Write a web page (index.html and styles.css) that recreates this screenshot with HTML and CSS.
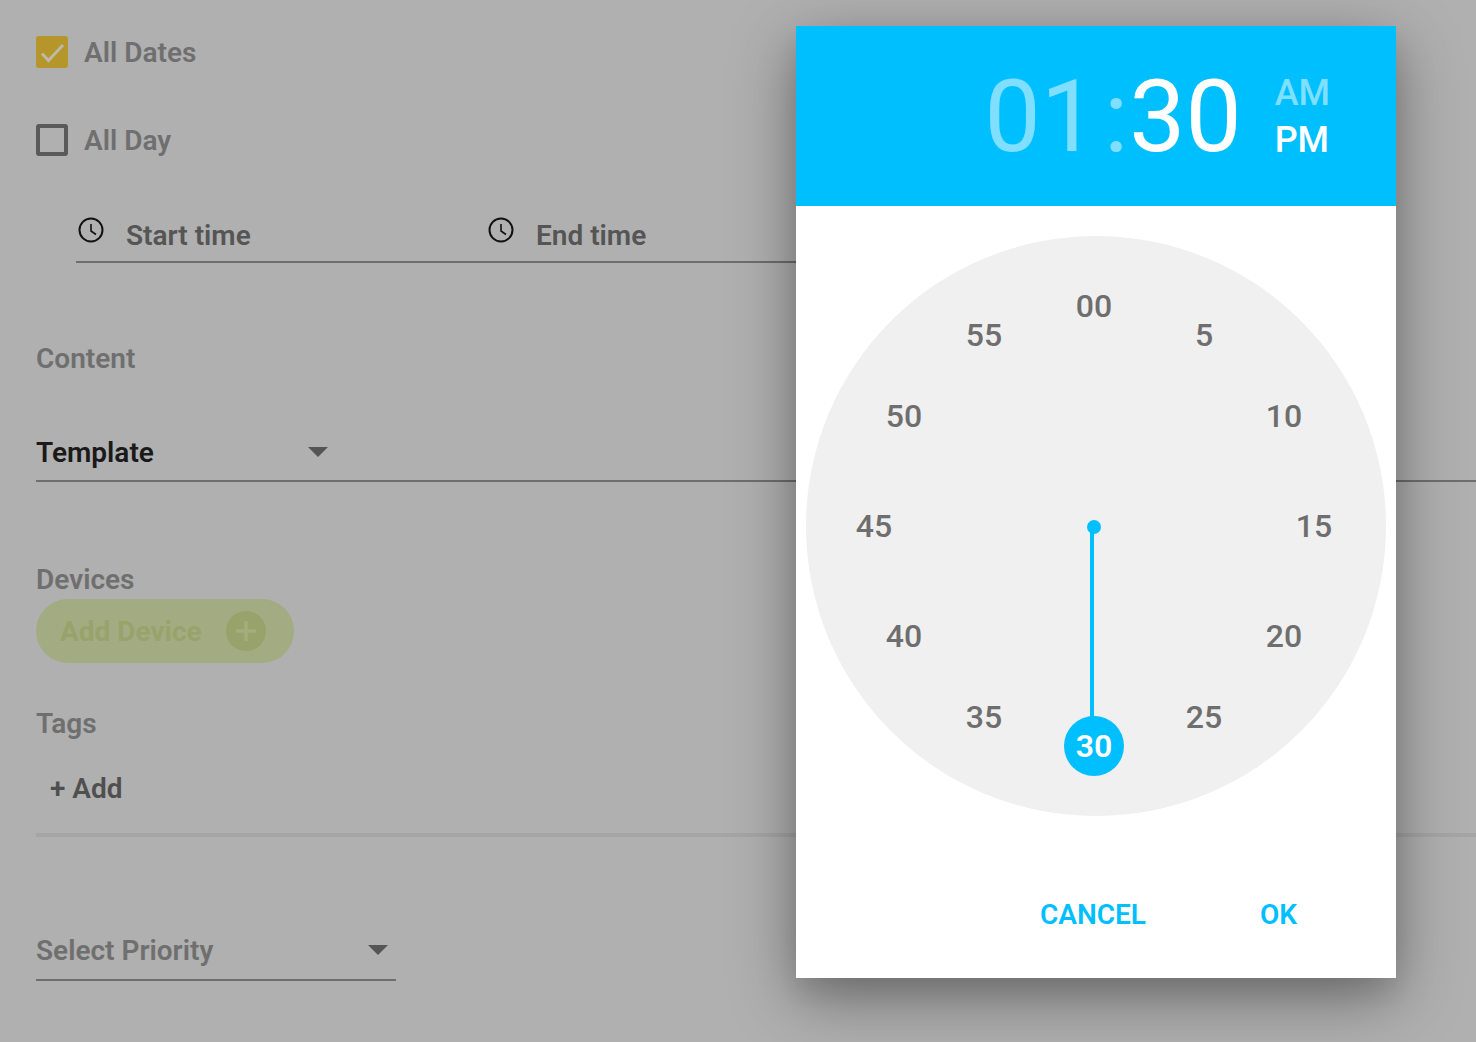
FILE: index.html
```html
<!DOCTYPE html>
<html lang="en">
	<head>
		<meta charset="UTF-8" />
		<meta name="viewport" content="width=device-width, initial-scale=1.0" />
		<title>Schedule</title>
		<link rel="stylesheet" href="styles.css">
	</head>
	<body>
		<form class="scheduleForm">
			<label class="checkRow">
				<span class="checkBox checked">
					<svg viewBox="0 0 32 32" width="32" height="32"><path d="M6 17.5l6.5 7L27 9" fill="none" stroke="#bdb9a8" stroke-width="3"/></svg>
				</span>
				All Dates
			</label>
			<label class="checkRow">
				<span class="checkBox"></span>
				All Day
			</label>

			<div class="timeRow">
				<div class="timeField">
					<svg class="clockIcon" viewBox="0 0 26 26" width="26" height="26"><circle cx="13" cy="13" r="11.5" fill="none" stroke="#111" stroke-width="2"/><path d="M13 7v7l5 3.5" fill="none" stroke="#111" stroke-width="1.6"/></svg>
					<span>Start time</span>
				</div>
				<div class="timeField">
					<svg class="clockIcon" viewBox="0 0 26 26" width="26" height="26"><circle cx="13" cy="13" r="11.5" fill="none" stroke="#111" stroke-width="2"/><path d="M13 7v7l5 3.5" fill="none" stroke="#111" stroke-width="1.6"/></svg>
					<span>End time</span>
				</div>
			</div>

			<div class="sectionLabel contentLabel">Content</div>
			<div class="selectRow templateRow">
				<div class="selectValue">
					<span>Template</span>
					<i class="caret"></i>
				</div>
			</div>

			<div class="sectionLabel devicesLabel">Devices</div>
			<div class="addDevice">
				<span>Add Device</span>
				<span class="addDevicePlus">
					<svg viewBox="0 0 40 40" width="40" height="40"><path d="M20 10v20M10 20h20" stroke="#a3ad7e" stroke-width="3.4"/></svg>
				</span>
			</div>

			<div class="sectionLabel tagsLabel">Tags</div>
			<div class="tagsRow">+ Add</div>

			<div class="prioritySelect">
				<span>Select Priority</span>
				<i class="caret"></i>
			</div>
		</form>

		<div class="timeDialog">
			<div class="timeHeader">
				<span class="timeDigits dim">01</span>
				<span class="timeDigits dim timeColon">:</span>
				<span class="timeDigits">30</span>
				<div class="meridiem">
					<span class="dim">AM</span>
					<span>PM</span>
				</div>
			</div>

			<div class="clockFace">
				<span class="clockNum" style="--x:0px;--y:-220px">00</span>
				<span class="clockNum" style="--x:110px;--y:-191px">5</span>
				<span class="clockNum" style="--x:190px;--y:-110px">10</span>
				<span class="clockNum" style="--x:220px;--y:0px">15</span>
				<span class="clockNum" style="--x:190px;--y:110px">20</span>
				<span class="clockNum" style="--x:110px;--y:191px">25</span>
				<span class="clockNum" style="--x:-110px;--y:191px">35</span>
				<span class="clockNum" style="--x:-190px;--y:110px">40</span>
				<span class="clockNum" style="--x:-220px;--y:0px">45</span>
				<span class="clockNum" style="--x:-190px;--y:-110px">50</span>
				<span class="clockNum" style="--x:-110px;--y:-191px">55</span>
				<div class="clockPin"></div>
				<div class="clockHand"></div>
				<div class="clockSelected">30</div>
			</div>

			<div class="dialogActions">
				<button type="button" class="cancelBtn">CANCEL</button>
				<button type="button">OK</button>
			</div>
		</div>
	</body>
</html>
```

FILE: styles.css
```css
* {
	box-sizing: border-box;
}

html,
body {
	margin: 0;
	height: 1042px;
	overflow: hidden;
}

body {
	background: #b0b0b0;
	font-family: Roboto, "Liberation Sans", sans-serif;
	font-weight: 600;
	font-size: 28px;
	color: #6f6f6f;
}

.scheduleForm {
	padding: 36px 0 0 36px;
	display: flex;
	flex-direction: column;
}

.checkRow {
	display: flex;
	align-items: center;
	gap: 16px;
	height: 32px;
	margin-bottom: 56px;
}

.checkBox {
	width: 32px;
	height: 32px;
	border: 4px solid #5a5a5a;
	border-radius: 3px;
	display: block;
}

.checkBox.checked {
	border: none;
	background: #b5962a;
}

.checkBox svg {
	display: block;
}

.timeRow {
	display: flex;
	width: 1000px;
	margin: -4px 0 0 40px;
	height: 55px;
	border-bottom: 2px solid #6e6e6e;
	color: #555;
}

.timeField {
	width: 410px;
	display: flex;
	padding: 9px 0 0 2px;
	gap: 22px;
}

.clockIcon {
	flex: none;
}

.timeField span {
	line-height: 32px;
	margin-top: 3px;
}

.sectionLabel {
	line-height: 34px;
}

.contentLabel {
	margin-top: 79px;
}

.selectRow {
	margin-top: 60px;
	height: 46px;
	border-bottom: 2px solid #6e6e6e;
	color: #1a1a1a;
}

.selectValue {
	width: 292px;
	display: flex;
	justify-content: space-between;
	align-items: center;
	height: 32px;
}

.caret {
	width: 0;
	height: 0;
	border-left: 10px solid transparent;
	border-right: 10px solid transparent;
	border-top: 10px solid #555;
}

.devicesLabel {
	margin-top: 81px;
}

.addDevice {
	margin-top: 2px;
	width: 258px;
	height: 64px;
	border-radius: 32px;
	background: #a3ab82;
	color: #98a36b;
	font-weight: 700;
	display: flex;
	align-items: center;
	justify-content: space-between;
	padding: 0 28px 0 24px;
}

.addDevicePlus {
	width: 40px;
	height: 40px;
	border-radius: 50%;
	background: #98a36b;
}

.addDevicePlus svg {
	display: block;
}

.tagsLabel {
	margin-top: 44px;
}

.tagsRow {
	margin-top: 31px;
	padding-left: 14px;
	height: 65px;
	border-bottom: 4px solid #a5a5a5;
	color: #4f4f4f;
}

.prioritySelect {
	margin-top: 97px;
	width: 360px;
	height: 47px;
	border-bottom: 2px solid #6e6e6e;
	display: flex;
	justify-content: space-between;
	padding-right: 8px;
}

.prioritySelect .caret {
	margin-top: 11px;
}

/* dialog sits over the dimmed form */
.timeDialog {
	position: absolute;
	left: 796px;
	top: 26px;
	width: 600px;
	height: 952px;
	background: white;
	box-shadow: 0 19px 60px rgba(0, 0, 0, 0.4), 0 15px 20px rgba(0, 0, 0, 0.06);
	display: flex;
	flex-direction: column;
}

.timeHeader {
	height: 180px;
	background: #00bfff;
	color: white;
	display: flex;
	justify-content: flex-end;
	align-items: center;
	padding: 2px 66px 0 0;
	font-weight: 400;
}

.timeDigits {
	font-size: 100px;
	line-height: 182px;
}

.timeColon {
	margin: 0 1px 0 7px;
}

.dim {
	color: rgba(255, 255, 255, 0.5);
}

.meridiem {
	display: flex;
	flex-direction: column;
	margin-left: 33px;
	font-size: 36px;
	font-weight: 500;
	line-height: 47px;
}

.clockFace {
	position: relative;
	width: 580px;
	height: 580px;
	margin: 30px 10px 0;
	border-radius: 50%;
	background: #f0f0f0;
}

.clockNum {
	position: absolute;
	left: calc(288px + var(--x));
	top: calc(290px + var(--y));
	transform: translate(-50%, -50%);
	font-size: 32px;
	font-weight: 500;
	color: #6e6e6e;
}

.clockPin {
	position: absolute;
	left: 281px;
	top: 284px;
	width: 14px;
	height: 14px;
	border-radius: 50%;
	background: #00bfff;
}

.clockHand {
	position: absolute;
	left: 284px;
	top: 290px;
	width: 4px;
	height: 195px;
	background: #00bfff;
}

.clockSelected {
	position: absolute;
	left: 258px;
	top: 480px;
	width: 60px;
	height: 60px;
	border-radius: 50%;
	background: #00bfff;
	color: white;
	font-size: 32px;
	line-height: 60px;
	text-align: center;
}

.dialogActions {
	display: flex;
	justify-content: flex-end;
	gap: 114px;
	padding: 83px 99px 0 0;
}

.dialogActions button {
	border: none;
	background: none;
	padding: 0;
	font: inherit;
	line-height: 32px;
	color: #00bfff;
}
```
